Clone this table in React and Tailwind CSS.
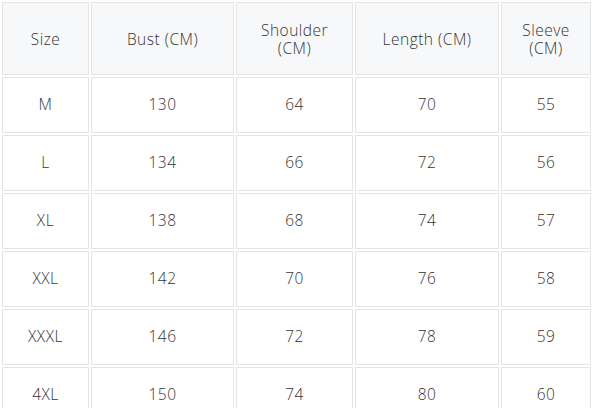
const headers = [
  ["Size"],
  ["Bust (CM)"],
  ["Shoulder", "(CM)"],
  ["Length (CM)"],
  ["Sleeve", "(CM)"],
];

const rows = [
  ["M", "130", "64", "70", "55"],
  ["L", "134", "66", "72", "56"],
  ["XL", "138", "68", "74", "57"],
  ["XXL", "142", "70", "76", "58"],
  ["XXXL", "146", "72", "78", "59"],
  ["4XL", "150", "74", "80", "60"],
];

const widths = ["w-[87px]", "w-[143px]", "w-[117px]", "w-[144px]", "w-[90px]"];

export default function App() {
  return (
    <div className="h-[408px] w-[593px] overflow-hidden bg-white text-[15.5px] font-light tracking-[0.5px] text-[#333] font-['Open_Sans',sans-serif]">
      <table className="table-fixed border-separate border-spacing-[2px]">
        <thead>
          <tr>
            {headers.map((h, i) => (
              <th
                key={i}
                className={`${widths[i]} h-[73px] border border-[#e4e4e4] bg-[#f7f8fa] p-0 text-center font-light leading-[18px]`}
              >
                {h.map((line, j) => (
                  <div key={j}>{line}</div>
                ))}
              </th>
            ))}
          </tr>
        </thead>
        <tbody>
          {rows.map((r, i) => (
            <tr key={i}>
              {r.map((c, j) => (
                <td
                  key={j}
                  className="h-[56px] border border-[#e4e4e4] bg-white p-0 text-center"
                >
                  {c}
                </td>
              ))}
            </tr>
          ))}
        </tbody>
      </table>
    </div>
  );
}
